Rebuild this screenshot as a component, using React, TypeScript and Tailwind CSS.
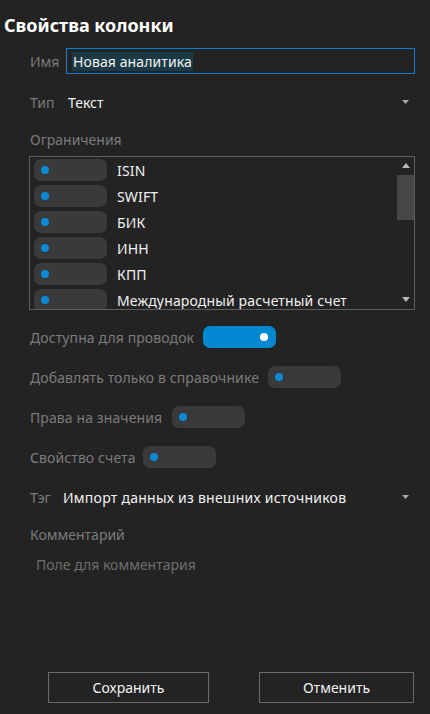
import React from 'react';

/* ++++++++++ DATA ++++++++++ */
const limits = ['ISIN', 'SWIFT', 'БИК', 'ИНН', 'КПП', 'Международный расчетный счет'];

const Toggle: React.FC<{ on?: boolean }> = ({ on }) =>
  on ? (
    <div className="w-[73px] h-[22px] rounded-[7px] bg-[#0288d1] flex items-center justify-end pr-[8px] shrink-0">
      <div className="w-[8px] h-[8px] rounded-full bg-white" />
    </div>
  ) : (
    <div className="w-[73px] h-[22px] rounded-[7px] bg-[#3a3a3a] flex items-center pl-[7px] shrink-0">
      <div className="w-[8px] h-[8px] rounded-full bg-[#0a8ad6]" />
    </div>
  );

const Caret: React.FC = () => (
  <svg width="7" height="4" viewBox="0 0 7 4" className="shrink-0">
    <path d="M0 0 L7 0 L3.5 4 Z" fill="#a8a8a8" />
  </svg>
);

const App: React.FC = () => {
  return (
    <div
      className="w-[430px] h-[714px] bg-[#232323] flex flex-col text-[14px] text-[#f2f2f2]"
      style={{ fontFamily: '"Noto Sans", "Open Sans", sans-serif' }}
    >
      {/* title */}
      <div className="pt-[13px] pl-[4px] h-[37px] text-[18px] leading-6 font-bold text-white">Свойства колонки</div>

      <div className="flex flex-col pl-[30px] pr-[15px]">
        {/* name */}
        <div className="mt-[11px] h-[26px] flex items-center">
          <span className="w-[36px] text-[#7b7b7b]">Имя</span>
          <div className="flex-1 h-[26px] border border-[#0a7fd6] flex items-center pl-[5px]">
            <span className="bg-[#1c3a46] leading-[19px] px-[1px] tracking-[0.1px]">Новая аналитика</span>
          </div>
        </div>

        {/* type */}
        <div className="mt-[15px] h-[26px] flex items-center pr-[6px]">
          <span className="w-[38px] text-[#7b7b7b]">Тип</span>
          <span className="flex-1">Текст</span>
          <Caret />
        </div>

        <div className="mt-[15px] h-[20px] leading-5 text-[#7b7b7b]">Ограничения</div>

        {/* limits list */}
        <div className="mt-[6px] h-[154px] border border-[#5e5e5e] flex overflow-hidden -ml-[1px]">
          <div className="flex-1 flex flex-col gap-[4px] pt-[2px] pl-[4px]">
            {limits.map((l) => (
              <div key={l} className="h-[22px] flex items-center gap-[10px] shrink-0">
                <Toggle />
                <span className="whitespace-nowrap tracking-[0.15px]">{l}</span>
              </div>
            ))}
          </div>
          <div className="w-[17px] flex flex-col items-center">
            <svg width="8" height="5" viewBox="0 0 8 5" className="mt-[6px]">
              <path d="M4 0 L8 5 L0 5 Z" fill="#b8b8b8" />
            </svg>
            <div className="w-full h-[45px] bg-[#474747] mt-[7px]" />
            <div className="flex-1" />
            <svg width="8" height="5" viewBox="0 0 8 5" className="mb-[7px]">
              <path d="M0 0 L8 0 L4 5 Z" fill="#b8b8b8" />
            </svg>
          </div>
        </div>

        {/* switches */}
        <div className="mt-[16px] flex flex-col gap-[18px] tracking-[0.1px]">
          <div className="h-[22px] flex items-center gap-[9px]">
            <span className="text-[#7b7b7b]">Доступна для проводок</span>
            <Toggle on />
          </div>
          <div className="h-[22px] flex items-center gap-[9px]">
            <span className="text-[#7b7b7b]">Добавлять только в справочнике</span>
            <Toggle />
          </div>
          <div className="h-[22px] flex items-center gap-[10px]">
            <span className="text-[#7b7b7b]">Права на значения</span>
            <Toggle />
          </div>
          <div className="h-[22px] flex items-center gap-[7px]">
            <span className="text-[#7b7b7b]">Свойство счета</span>
            <Toggle />
          </div>
        </div>

        {/* tag */}
        <div className="mt-[16px] h-[26px] flex items-center pr-[6px]">
          <span className="w-[33px] text-[#7b7b7b]">Тэг</span>
          <span className="flex-1 tracking-[0.25px]">Импорт данных из внешних источников</span>
          <Caret />
        </div>

        <div className="mt-[15px] h-[20px] leading-5 text-[#7b7b7b]">Комментарий</div>
        <div className="mt-[10px] h-[20px] leading-5 pl-[6px] text-[#6e6e6e]">Поле для комментария</div>
      </div>

      {/* buttons */}
      <div className="mt-auto mb-[11px] flex pl-[48px] pr-[16px] gap-[50px]">
        <button className="w-[161px] h-[31px] border border-[#6b6b6b] text-[#f2f2f2]">Сохранить</button>
        <button className="flex-1 h-[31px] border border-[#6b6b6b] text-[#f2f2f2]">Отменить</button>
      </div>
    </div>
  );
};

export default App;
